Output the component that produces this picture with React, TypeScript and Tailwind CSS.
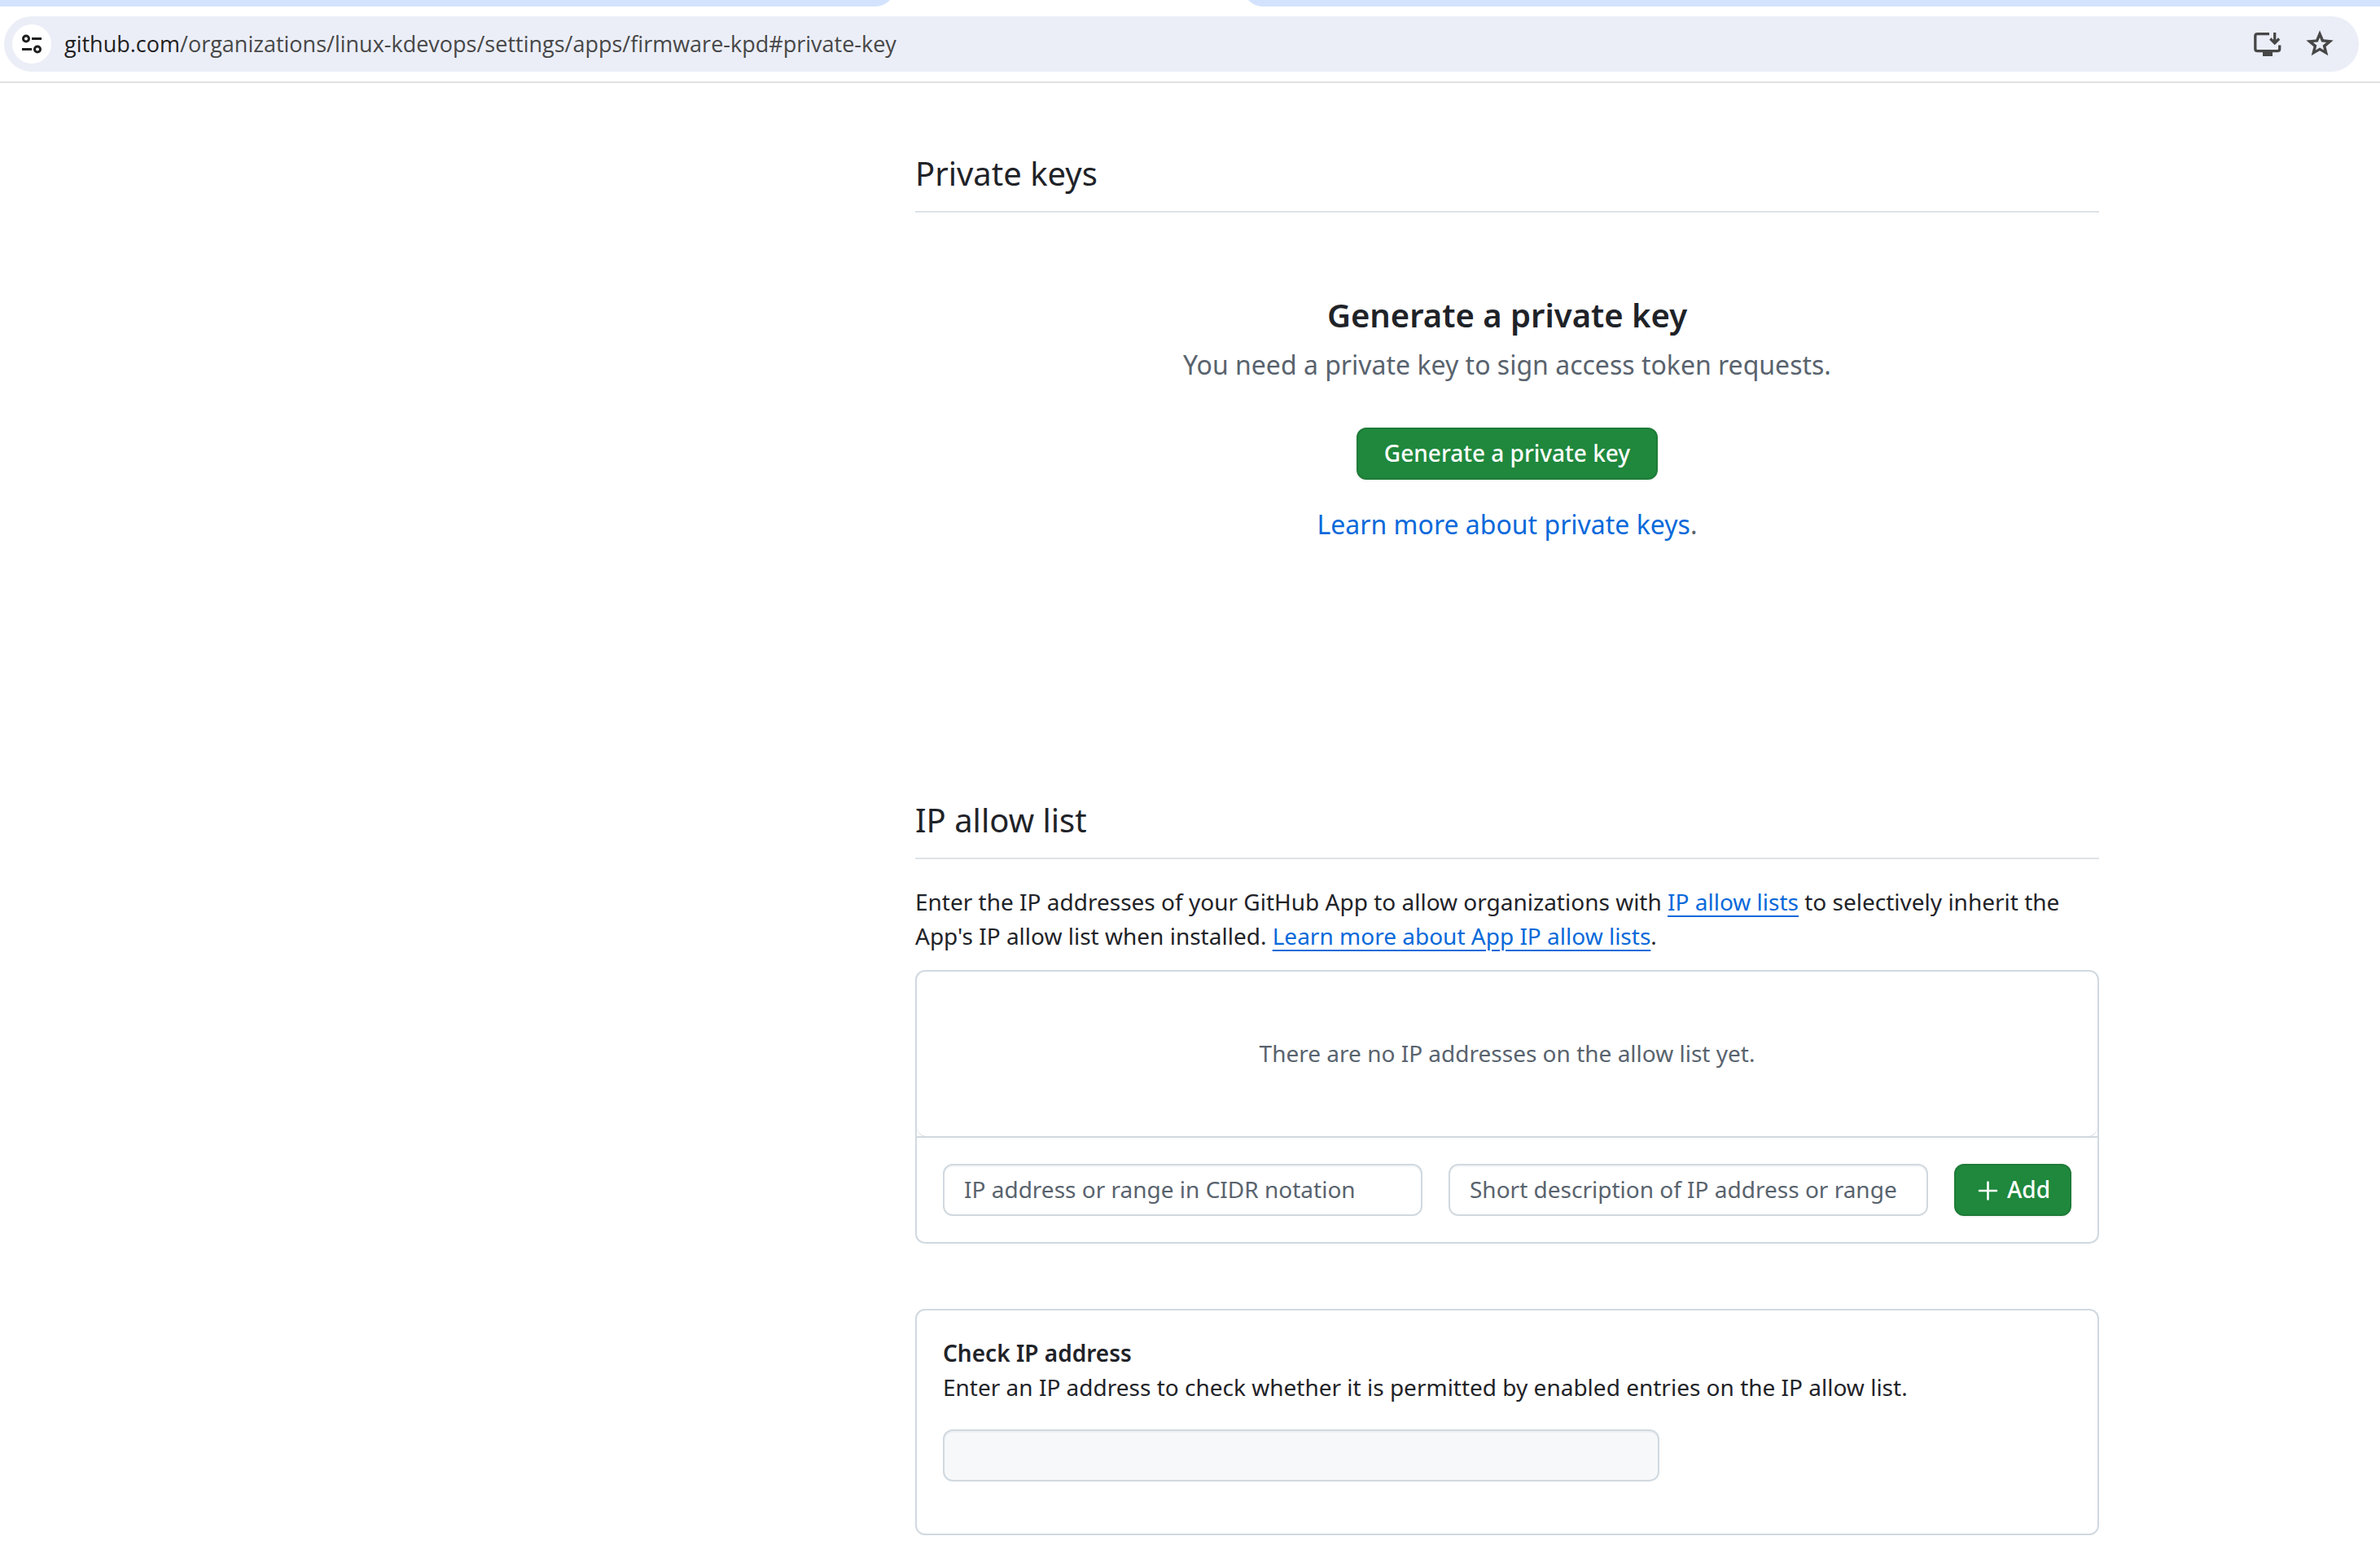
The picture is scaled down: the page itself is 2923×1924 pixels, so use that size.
import type { ReactNode } from "react";

function TuneIcon() {
  return (
    <svg viewBox="0 0 26 26" className="h-[26px] w-[26px]" fill="none" stroke="#1f1f1f" strokeWidth="3" aria-hidden="true">
      <circle cx="6" cy="6.500" r="3.500" />
      <path d="M13 6.500h12M1 19.500h12" />
      <circle cx="20" cy="19.500" r="3.500" />
    </svg>
  );
}

function InstallIcon() {
  return (
    <svg viewBox="0 0 36 32" className="h-8 w-9" fill="none" stroke="#474747" strokeWidth="3.300" aria-hidden="true">
      <path d="M20 3.600H5.500Q2.800 3.600 2.800 6.300V22Q2.800 24.700 5.500 24.700H30Q32.700 24.700 32.700 22V17.500" />
      <path d="M12 25H24V31H12Z" fill="#474747" stroke="none" />
      <path d="M26.700 2V14.500M21.300 9.500L26.700 14.900L32.100 9.500" />
    </svg>
  );
}

function StarIcon() {
  return (
    <svg viewBox="0 0 24 24" className="h-10 w-10" fill="#474747" fillRule="evenodd" aria-hidden="true">
      <path d="M22 9.240L14.810 8.620L12 2L9.190 8.630L2 9.240L7.460 13.970L5.820 20.600L12 17L18.180 20.600L16.550 13.970ZM12 14.700L9 16.500L9.800 13.100L7.100 10.800L10.700 10.500L12 7.200L13.300 10.500L16.900 10.800L14.200 13.100L15 16.500Z" />
    </svg>
  );
}

function PlusIcon() {
  return (
    <svg viewBox="0 0 32 32" className="h-8 w-8" fill="none" stroke="currentColor" strokeWidth="2.600" strokeLinecap="round" aria-hidden="true">
      <path d="M15.500 7.500V28.500M5 18H26" />
    </svg>
  );
}

function BrowserBar() {
  return (
    <header className="border-b-2 border-[#e0e0e0]">
      <div className="flex h-2 items-end justify-between overflow-hidden">
        <div className="h-6 w-[1099px] shrink-0 rounded-br-3xl bg-[#d3e3fd]" />
        <div className="h-6 w-[1396px] shrink-0 rounded-bl-3xl bg-[#d3e3fd]" />
      </div>
      <div className="py-3 pr-[26px] pl-[5px]">
        <div className="flex h-[68px] items-center rounded-full bg-[#ebeef7] pr-7 pl-[10px]">
          <button aria-label="View site information" className="flex h-12 w-12 items-center justify-center rounded-full bg-white">
            <TuneIcon />
          </button>
          <div className="ml-4 flex-1 font-['Open_Sans','Noto_Sans',sans-serif] text-[27px] text-[#474747]">
            <span className="text-[#1f1f1f]">github.com</span>/organizations/linux-kdevops/settings/apps/firmware-kpd#private-key
          </div>
          <button aria-label="Install app" className="mr-[26px]">
            <InstallIcon />
          </button>
          <button aria-label="Bookmark this tab">
            <StarIcon />
          </button>
        </div>
      </div>
    </header>
  );
}

function SectionHeading({ children }: { children: ReactNode }) {
  return (
    <h2 className="border-b-2 border-[#dde3e8] pb-4 text-[40px] leading-[60px]">{children}</h2>
  );
}

function TextField({ label }: { label: string }) {
  return (
    <input
      type="text"
      aria-label={label}
      placeholder={label}
      className="h-16 min-w-0 flex-1 rounded-xl border-2 border-[#d1d9e0] bg-white px-6 pb-0.5 text-[28px] shadow-[inset_0_2px_0_#1f23280a] placeholder:text-[#59636e]"
    />
  );
}

const primaryButton =
  "h-16 rounded-xl border-2 border-[#1f7b38] bg-[#1f883d] pb-0.5 text-[28px] font-medium text-white shadow-[0_2px_2px_#1f23280a]";

const inlineLink = "text-[#0969da] underline decoration-2 underline-offset-[6px]";

export default function App() {
  return (
    <div className="bg-white font-['Noto_Sans',sans-serif] text-[28px] leading-[42px] text-[#1f2328]">
      <BrowserBar />
      <main className="mr-[345px] ml-[1124px] pt-[81px] pb-[39px]">
        <section>
          <SectionHeading>Private keys</SectionHeading>
          <div className="flex flex-col items-center pt-24 pb-[309px] text-[32px] leading-[48px] text-[#59636e]">
            <h3 className="text-[40px] leading-[60px] font-semibold text-[#1f2328]">Generate a private key</h3>
            <p className="mt-[7px]">You need a private key to sign access token requests.</p>
            <button className={`${primaryButton} mt-[53px] px-8`}>Generate a private key</button>
            <p className="mt-[31px]">
              <a href="#private-keys" className="text-[#0969da]">Learn more about private keys</a>.
            </p>
          </div>
        </section>
        <section>
          <SectionHeading>IP allow list</SectionHeading>
          <p className="mt-[31px]">
            Enter the IP addresses of your GitHub App to allow organizations with{" "}
            <a href="#ip-allow-lists" className={inlineLink}>IP allow lists</a> to selectively
            inherit the App's IP allow list when installed.{" "}
            <a href="#app-ip-allow-lists" className={inlineLink}>Learn more about App IP allow lists</a>.
          </p>
          <div className="mt-[21px] rounded-xl border-2 border-[#d1d9e0]">
            <div className="border-b-2 border-[#d1d9e0]">
              <p className="rounded-b-xl pt-[79px] pb-[81px] text-center text-[#59636e] shadow-[0_1px_0_#d1d9e0]">
                There are no IP addresses on the allow list yet.
              </p>
            </div>
            <form className="flex gap-8 p-8">
              <TextField label="IP address or range in CIDR notation" />
              <TextField label="Short description of IP address or range" />
              <button type="button" className={`${primaryButton} flex items-center gap-[7px] px-6`}>
                <PlusIcon />
                Add
              </button>
            </form>
          </div>
          <div className="mt-20 rounded-xl border-2 border-[#d1d9e0] px-8 pt-[31px] pb-16">
            <label htmlFor="check-ip" className="block font-semibold">Check IP address</label>
            <p>Enter an IP address to check whether it is permitted by enabled entries on the IP allow list.</p>
            <input
              id="check-ip"
              type="text"
              disabled
              className="mt-[31px] block h-16 w-[880px] rounded-xl border-2 border-[#d1d9e0] bg-[#f6f8fa] px-6 shadow-[inset_0_2px_0_#1f23280a]"
            />
          </div>
        </section>
      </main>
    </div>
  );
}
